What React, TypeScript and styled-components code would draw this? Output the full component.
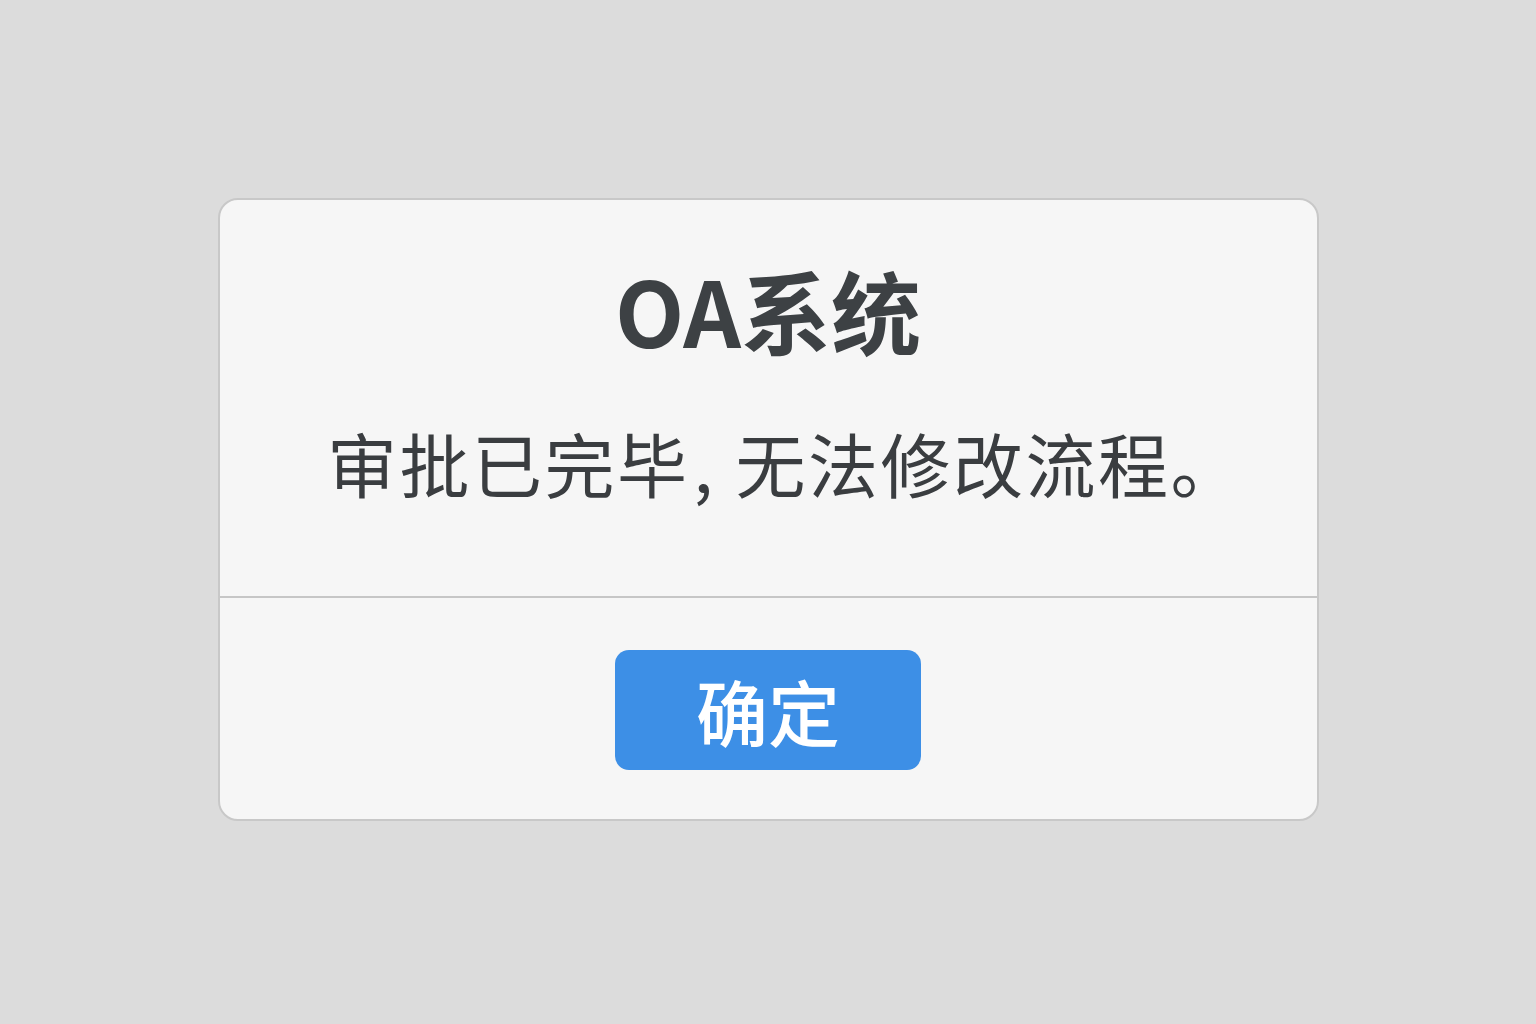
import React from "react";
import styled, { createGlobalStyle } from "styled-components";

const GlobalStyle = createGlobalStyle`
  html, body {
    margin: 0;
    padding: 0;
    background: #dcdcdc;
  }
  body {
    font-family: "Noto Sans CJK SC", "Noto Sans", sans-serif;
  }
`;

const Page = styled.div`
  min-height: 100vh;
  box-sizing: border-box;
  display: flex;
  align-items: center;
  justify-content: center;
  padding-bottom: 6px;
`;

const Dialog = styled.div`
  width: 1101px;
  box-sizing: border-box;
  background: #f6f6f6;
  border: 2px solid #c8c8c8;
  border-radius: 20px;
  display: flex;
  flex-direction: column;
  overflow: hidden;
`;

const Body = styled.div`
  display: flex;
  flex-direction: column;
  align-items: center;
  padding: 59px 40px 93px;
  gap: 64px;
  border-bottom: 2px solid #c6c6c6;
`;

const Title = styled.h1`
  margin: 0;
  font-size: 90px;
  line-height: 100px;
  font-weight: 700;
  color: #3d4144;
  font-family: "Noto Sans CJK SC", "Noto Sans", sans-serif;
`;

const Message = styled.p`
  margin: 0;
  padding-left: 34px;
  font-size: 70px;
  line-height: 80px;
  font-weight: 400;
  letter-spacing: 2.5px;
  color: #3a3d40;
  font-family: "Noto Sans CJK SC", "Noto Sans", sans-serif;
`;

const Comma = styled.span`
  display: inline-block;
  width: 46px;
  padding-left: 4px;
  box-sizing: border-box;
`;

const Footer = styled.div`
  display: flex;
  justify-content: center;
  padding: 52px 0 49px;
`;

const ConfirmButton = styled.button`
  width: 306px;
  height: 120px;
  border: none;
  border-radius: 14px;
  background: #3d8fe6;
  color: #ffffff;
  font-family: "Noto Sans CJK SC", "Noto Sans", sans-serif;
  font-size: 72px;
  font-weight: 500;
  line-height: 1;
  cursor: pointer;
  display: flex;
  align-items: center;
  justify-content: center;
`;

export default function App() {
  return (
    <>
      <GlobalStyle />
      <Page>
        <Dialog>
          <Body>
            <Title>OA系统</Title>
            <Message>
              审批已完毕<Comma>,</Comma>无法修改流程。
            </Message>
          </Body>
          <Footer>
            <ConfirmButton>确定</ConfirmButton>
          </Footer>
        </Dialog>
      </Page>
    </>
  );
}
